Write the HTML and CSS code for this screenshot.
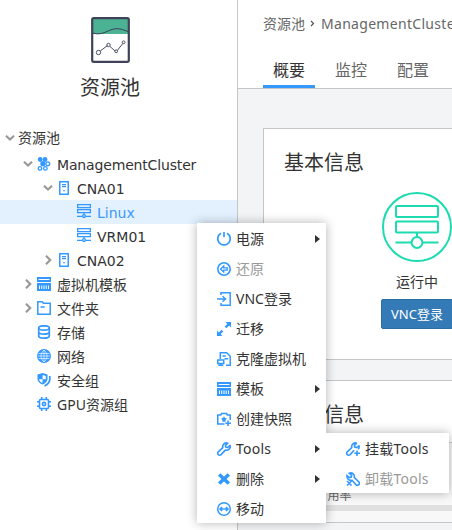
FILE: index.html
```html
<!DOCTYPE html>
<html lang="zh-CN">
<head>
<meta charset="utf-8">
<title>资源池</title>
<link rel="stylesheet" href="styles.css">
</head>
<body>
<svg class="sprite" aria-hidden="true">
  <symbol id="down" viewBox="0 0 10 10"><path d="M1 2.8 5 6.6 9 2.8" fill="none" stroke="#999" stroke-width="2.2"/></symbol>
  <symbol id="right" viewBox="0 0 10 10"><path d="M3 .8 7.2 5 3 9.2" fill="none" stroke="#999" stroke-width="2.2"/></symbol>
  <symbol id="cluster" viewBox="0 0 14 14"><g fill="currentColor"><circle cx="3.2" cy="2.5" r="2.400"/><circle cx="8" cy="2.5" r="2.400"/><circle cx="5.900" cy="6.700" r="2.600"/></g><g fill="none" stroke="currentColor" stroke-width="1.300"><circle cx="10.800" cy="6.700" r="1.900"/><circle cx="3" cy="11.400" r="1.800"/><circle cx="8.400" cy="11.400" r="1.800"/></g></symbol>
  <symbol id="host" viewBox="0 0 14 14"><path d="M2.750.750h8.500v12.500h-8.500z" fill="none" stroke="currentColor" stroke-width="1.500"/><path d="M5 3h4v1.200H5zM5 5h4v1.200H5zM6.200 9h1.600v1.300H6.200z" fill="currentColor"/></symbol>
  <symbol id="vm" viewBox="0 0 14 14"><g fill="none" stroke="currentColor" stroke-width="1.300"><path d="M.650.650h12.700v3H.650zM.650 5.650h12.700v3H.650zM7 8.650v2M0 12.350h5M9 12.350h5"/><circle cx="7" cy="12.100" r="1.400"/></g></symbol>
  <symbol id="template" viewBox="0 0 14 14"><path fill="currentColor" fill-rule="evenodd" d="M0 0h14v5H0zM1.500 2v1h11V2zM0 6h14v8H0zM2 8.500V12h1V8.500zM4.200 8.500V12h1V8.500zM6.500 8.500V12h1V8.500zM8.700 8.500V12h1V8.500zM11 8.500V12h1V8.500z"/></symbol>
  <symbol id="folder" viewBox="0 0 14 14"><path d="M.8.8h4.400l1.300 1.500h6.700v10.900H.8zM3.500 6h4.200" fill="none" stroke="currentColor" stroke-width="1.500"/></symbol>
  <symbol id="store" viewBox="0 0 14 14"><g fill="none" stroke="currentColor" stroke-width="1.700"><ellipse cx="7" cy="3" rx="5.300" ry="2.200"/><path d="M1.700 3v8c0 2.900 10.600 2.900 10.600 0V3M1.700 7c0 2.900 10.600 2.900 10.600 0"/></g></symbol>
  <symbol id="globe" viewBox="0 0 14 14"><circle cx="7" cy="7" r="7" fill="currentColor"/><path d="M1.500 4.500h11M1 7h12M1.500 9.500h11M7 1v12M7 1C3 4.500 3 9.500 7 13M7 1c4 3.500 4 8.500 0 12" fill="none" stroke="#fff" stroke-width=".65"/></symbol>
  <symbol id="shield" viewBox="0 0 14 14"><path d="M5.500 0 10.500 1.500v5Q9.500 10 5.500 11.500 1.500 10 .5 6.500v-5z" fill="currentColor"/><path d="M5.600 2v4.300h3.200V3zM5.500 6.300H2c.4 1.700 1.500 2.900 3.500 3.800z" fill="#fff"/><path d="M12.800 3v4c-.5 2.700-2.400 4.600-5.300 6" fill="none" stroke="currentColor" stroke-width="1.700"/></symbol>
  <symbol id="gpu" viewBox="0 0 14 14"><g fill="none" stroke="currentColor" stroke-width="1.600"><rect x="2.500" y="2.500" width="9" height="9" rx="1"/><circle cx="7" cy="7" r="1.600"/><path d="M4.700 0v2.500M9.300 0v2.500M4.700 11.500V14M9.300 11.500V14M0 4.700h2.500M0 9.300h2.500M11.500 4.700H14M11.500 9.300H14"/></g></symbol>
  <symbol id="power" viewBox="0 0 14 14"><path d="M4 1.300a6.200 6.200 0 1 0 6 0M7 0v5" fill="none" stroke="currentColor" stroke-width="1.700"/></symbol>
  <symbol id="restore" viewBox="0 0 14 14"><g fill="none" stroke="currentColor"><circle cx="7" cy="7" r="6.200" stroke-width="1.600"/><path d="M3.500 7 6.700 4v1.800h3.500v2.400H6.700V10z" stroke-width="1.300"/></g></symbol>
  <symbol id="login" viewBox="0 0 14 14"><path d="M4 3V.8h9.200v12.400H4V11M0 7h8M5.500 4.200 8.500 7l-3 2.800" fill="none" stroke="currentColor" stroke-width="1.500"/></symbol>
  <symbol id="migrate" viewBox="0 0 14 14"><path d="M8.500 0H14v5.500l-1.900-1.900-2.700 2.700-1.700-1.700 2.700-2.700zM0 8.500l1.900 1.900 2.700-2.700 1.700 1.700-2.700 2.700L5.500 14H0z" fill="currentColor"/></symbol>
  <symbol id="clone" viewBox="0 0 14 14"><g fill="none" stroke="currentColor" stroke-width="1.500"><path d="M3.300 7V.750h6.400l3.550 3.450v9.050H9M5.500 4h3.300M7.500 6.800h3.700M.750 8h6v3.600h-6zM3.700 11.600v1.700M1.300 13.250h5"/></g></symbol>
  <symbol id="snapshot" viewBox="0 0 14 14"><path d="M7.500 12H.750V3h3l.8-1.500h5l.8 1.500h2.900v5M11 8.500V14M8.300 11.300H14" fill="none" stroke="currentColor" stroke-width="1.600"/><path d="M7 4.300 8 6l2 .5L8.500 8v1.800H5.400V8L4 6.500 6 6z" fill="currentColor"/></symbol>
  <symbol id="wrench" viewBox="0 0 14 14"><path d="M10.800 1.200a3.700 3.700 0 0 0-5 4.400L1.300 9.800a1.900 1.900 0 0 0 2.800 2.800l4.200-4.500a3.800 3.800 0 0 0 4.800-4.700L10.700 5.500 8.700 5l-.3-1.700z" fill="none" stroke="currentColor" stroke-width="1.600" stroke-linejoin="round"/></symbol>
  <symbol id="mount" viewBox="0 0 14 14"><path d="M10.800 1.200a3.700 3.700 0 0 0-5 4.400L1.300 9.800a1.900 1.900 0 0 0 2.800 2.800l4-4.300M13 3.500 10.700 5.500 8.700 5l-.3-1.700 2.400-2.100M13 3.500c.4 1.600 0 3-.8 3.800M11 8.500V14M8.300 11.300H14" fill="none" stroke="currentColor" stroke-width="1.600"/></symbol>
  <symbol id="unmount" viewBox="0 0 14 14"><path d="M3.300 1.200a3.700 3.700 0 0 1 5 4.400l4.500 4.200a1.900 1.900 0 0 1-2.800 2.800L6 8.300C3.500 8.800.5 6.800 1 3.500l2.400 2L5.300 5l.3-1.700zM1 9l4.500 4.500M5.500 9 1 13.500" fill="none" stroke="currentColor" stroke-width="1.600"/></symbol>
  <symbol id="delete" viewBox="0 0 14 14"><path d="m2.200 2.500 9.600 9M11.800 2.500l-9.600 9" fill="none" stroke="currentColor" stroke-width="3.600"/></symbol>
  <symbol id="move" viewBox="0 0 14 14"><g fill="none" stroke="currentColor" stroke-width="1.500"><circle cx="7" cy="7" r="6.250"/><path d="M3.300 7h7.400M5 5 3 7l2 2M9 5l2 2-2 2"/></g></symbol>
</svg>

<div class="app">
  <aside class="side">
    <div class="brand">
      <svg class="brand-icon" viewBox="0 0 39 46">
        <path fill="#fff" d="M1 1h37v44H1z"/>
        <path fill="#4bb393" d="M2 2h35v15H2z"/>
        <path d="M2 16.200C13 19 17 11.700 26 11.700c4 0 7 1.300 11 2.800" fill="none" stroke="#3b4058" stroke-width="1"/>
        <rect x="1.200" y="1.200" width="36.600" height="43.600" rx="1.500" fill="none" stroke="#3f435a" stroke-width="2.200"/>
        <g fill="none" stroke="#4c5065" stroke-width="1"><path d="m9.300 34 7.200-5.500M19 29.500l5.200 4.600M26.300 33.500l5.700-7.300"/><circle cx="7.500" cy="35.500" r="2.200"/><circle cx="17.500" cy="28" r="1.700"/><circle cx="25.200" cy="34.300" r="1.400"/><circle cx="32.600" cy="25.300" r="1.400"/></g>
      </svg>
      <h1>资源池</h1>
    </div>
    <ul class="tree">
      <li class="l0"><svg class="arrow"><use href="#down"/></svg><span>资源池</span></li>
      <li class="l1"><svg class="arrow"><use href="#down"/></svg><svg class="ico"><use href="#cluster"/></svg><span class="wide tight">ManagementCluster</span></li>
      <li class="l2"><svg class="arrow"><use href="#down"/></svg><svg class="ico"><use href="#host"/></svg><span class="wide">CNA01</span></li>
      <li class="l3 selected"><svg class="ico"><use href="#vm"/></svg><span class="wide">Linux</span></li>
      <li class="l3"><svg class="ico"><use href="#vm"/></svg><span class="wide">VRM01</span></li>
      <li class="l2"><svg class="arrow"><use href="#right"/></svg><svg class="ico"><use href="#host"/></svg><span class="wide">CNA02</span></li>
      <li class="l1"><svg class="arrow"><use href="#right"/></svg><svg class="ico"><use href="#template"/></svg><span>虚拟机模板</span></li>
      <li class="l1"><svg class="arrow"><use href="#right"/></svg><svg class="ico"><use href="#folder"/></svg><span>文件夹</span></li>
      <li class="leaf"><svg class="ico"><use href="#store"/></svg><span>存储</span></li>
      <li class="leaf"><svg class="ico"><use href="#globe"/></svg><span>网络</span></li>
      <li class="leaf"><svg class="ico"><use href="#shield"/></svg><span>安全组</span></li>
      <li class="leaf"><svg class="ico"><use href="#gpu"/></svg><span>GPU资源组</span></li>
    </ul>
  </aside>
  <main class="main">
    <header class="head">
      <div class="crumbs"><span>资源池</span><svg class="sep" viewBox="0 0 5 7"><path d="m1 1 2.500 2.500L1 6" fill="none" stroke="#555" stroke-width="1.200"/></svg><span class="path">ManagementCluster</span></div>
      <nav class="tabs"><a class="active">概要</a><a>监控</a><a>配置</a></nav>
    </header>
    <section class="card basic">
      <h2>基本信息</h2>
      <div class="status">
        <svg class="status-icon" viewBox="0 0 70 70"><g fill="none" stroke="#1ddbb0" stroke-width="2"><circle cx="35" cy="35" r="34"/><rect x="14" y="14" width="42" height="11" rx="1"/><rect x="14" y="29.500" width="42" height="11" rx="1"/><path d="M35 40.500V45M13.500 50.500H29.500M40.500 50.500h16"/><circle cx="35" cy="50.500" r="5.400"/></g></svg>
        <span>运行中</span>
        <button>VNC登录</button>
      </div>
    </section>
    <section class="card monitor">
      <h2>监控信息</h2>
      <div class="usage"><span>CPU占用率</span><div class="bar"></div></div>
    </section>
  </main>
</div>

<ul class="menu">
  <li class="more"><svg class="ico"><use href="#power"/></svg>电源</li>
  <li class="off"><svg class="ico"><use href="#restore"/></svg>还原</li>
  <li><svg class="ico"><use href="#login"/></svg>VNC登录</li>
  <li><svg class="ico"><use href="#migrate"/></svg>迁移</li>
  <li><svg class="ico"><use href="#clone"/></svg>克隆虚拟机</li>
  <li class="more"><svg class="ico"><use href="#template"/></svg>模板</li>
  <li><svg class="ico"><use href="#snapshot"/></svg>创建快照</li>
  <li class="more"><svg class="ico"><use href="#wrench"/></svg><span class="latin">Tools</span></li>
  <li class="more"><svg class="ico"><use href="#delete"/></svg>删除</li>
  <li><svg class="ico"><use href="#move"/></svg>移动</li>
</ul>
<ul class="menu submenu">
  <li><svg class="ico"><use href="#mount"/></svg><span class="latin">挂载Tools</span></li>
  <li class="off"><svg class="ico"><use href="#unmount"/></svg><span class="latin">卸载Tools</span></li>
</ul>
</body>
</html>
```

FILE: styles.css
```css
* { box-sizing: border-box; }
body {
  margin: 0;
  height: 530px;
  overflow: hidden;
  font: 14px/24px "Noto Sans", "Noto Sans CJK SC", sans-serif;
  color: #333;
  background: #fff;
}
h1, h2, ul { margin: 0; padding: 0; font-weight: 400; list-style: none; }
svg { display: block; flex: none; }
.sprite { position: absolute; width: 0; height: 0; }
.app { display: flex; height: 530px; }
.side { width: 238px; flex: none; border-right: 1px solid #c5c6c8; }
.brand { display: flex; flex-direction: column; align-items: center; padding: 17px 17px 0 0; height: 126px; }
.brand-icon { width: 39px; height: 46px; }
.brand h1 { font-size: 20px; line-height: 28px; margin-top: 11px; }
.tree li { display: flex; align-items: center; height: 24px; padding-top: 2px; white-space: nowrap; }
.tree .l0 { height: 26px; padding: 0 0 2px 5px; }
.tree .l1 { padding-left: 23px; }
.tree .l2 { padding-left: 43px; }
.tree .l3 { padding-left: 77px; }
.tree .leaf { padding-left: 37px; }
.tree .selected { background: #e3f1ff; color: #3b99fc; }
.tree .l0 + .l1 { padding-top: 1px; }
.tree li:not(.l0) { line-height: 22px; }
.arrow { width: 10px; height: 10px; margin: 0 4px 2px 0; }
.l0 .arrow { margin: 0 3px 0 0; }
.ico { width: 14px; height: 14px; color: #3399ff; }
.tree .ico { margin: 0 6px 2px 0; }
.tree .selected .ico, .tree .selected + .l3 .ico { margin-bottom: 4px; }
.wide { font-family: "DejaVu Sans", sans-serif; }
.tight { letter-spacing: -.16px; }
.path { letter-spacing: .3px; }
.latin { letter-spacing: .25px; }
.main { flex: 1; min-width: 0; overflow: hidden; background: #f3f4f6; }
.head { height: 89px; padding: 12px 0 0 25px; background: #fff; border-bottom: 1px solid #c5c6c8; }
.crumbs { display: flex; align-items: center; color: #666; white-space: nowrap; }
.sep { width: 5px; height: 7px; margin: 0 6px 2px 5px; }
.tabs { display: flex; gap: 10px; margin-top: 17px; font-size: 16px; line-height: 35px; color: #666; }
.tabs a { width: 52px; height: 35px; text-align: center; }
.tabs .active { color: #333; border-bottom: 3px solid #3399ff; }
.card { width: 360px; margin-left: 25px; background: #fff; border: 1px solid #c5c6c8; }
.card h2 { padding: 19px 20px 0; font-size: 20px; line-height: 30px; }
.basic { height: 232px; margin-top: 39px; }
.status { display: flex; flex-direction: column; align-items: center; width: 72px; margin: 14px 0 0 117px; }
.status-icon { width: 70px; height: 70px; }
.status span { margin-top: 8px; }
.status button { width: 72px; height: 30px; margin-top: 5px; padding: 0; font: 13px/28px "Noto Sans", "Noto Sans CJK SC", sans-serif; color: #fff; background: #337ab7; border: 1px solid #2e6da4; border-radius: 2px; }
.monitor { height: 143px; margin-top: 20px; }
.usage { margin-top: 12px; padding: 44px 28px 0; height: 80px; border-top: 1px solid #ccc; background: #f8f8f8; font-size: 12px; line-height: 18px; color: #666; }
.bar { width: 300px; height: 6px; background: #e0e0e0; }
.menu { position: absolute; left: 197px; top: 223px; width: 129px; background: #fff; padding-top: 1px; height: 300px; box-shadow: 0 0 10px rgba(0, 0, 0, .3); }
.menu li { display: flex; align-items: center; gap: 5px; height: 30px; padding-left: 20px; white-space: nowrap; }
.menu .off { color: #999; }
.more::after { content: ""; margin: 0 6px 0 auto; border: 4px solid transparent; border-left: 5px solid #333; border-right: 0; }
.submenu { left: 326px; top: 433px; width: 123px; height: 60px; clip-path: inset(-12px -12px -12px 0); }
```
